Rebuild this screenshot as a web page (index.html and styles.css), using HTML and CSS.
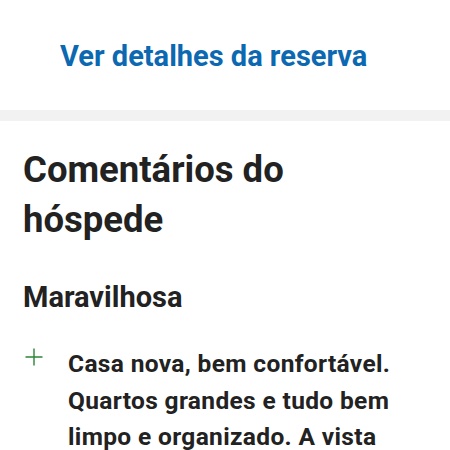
FILE: index.html
```html
<!DOCTYPE html>
<html lang="pt">
  <head>
    <meta charset="UTF-8" />
    <meta name="viewport" content="width=device-width, initial-scale=1.0" />
    <title>Comentários do hóspede</title>
    <link rel="stylesheet" href="styles.css">
  </head>
  <body>
    <div class="booking-link">
      <a href="#">Ver detalhes da reserva</a>
    </div>
    <div class="divider"></div>
    <div class="reviews">
      <h2>Comentários do hóspede</h2>
      <h3>Maravilhosa</h3>
      <div class="review-item">
        <svg class="plus-icon" width="18" height="18" viewBox="0 0 18 18">
          <path d="M9 0.5V17.5M0.5 9H17.5" stroke="#2a8536" stroke-width="1.4" fill="none" />
        </svg>
        <p>Casa nova, bem confortável. Quartos grandes e tudo bem limpo e organizado. A vista</p>
      </div>
    </div>
  </body>
</html>
```

FILE: styles.css
```css
body {
  font-family: Roboto, "Liberation Sans", sans-serif;
  background-color: #fff;
  margin: 0;
  padding: 0;
}
.booking-link {
  height: 110px;
  padding: 2px 0 0 60px;
  box-sizing: border-box;
  display: flex;
  align-items: center;
}
.booking-link a {
  color: #0b68b1;
  font-size: 29px;
  font-weight: bold;
  text-decoration: none;
}
.divider {
  height: 11px;
  background-color: #f2f2f2;
}
.reviews {
  padding: 0 23px;
}
h2 {
  margin: 24px 0 0;
  font-size: 36.5px;
  line-height: 50px;
  font-weight: bold;
  color: #222;
}
h3 {
  margin: 34px 0 0;
  font-size: 29px;
  line-height: 36px;
  font-weight: bold;
  color: #222;
}
.review-item {
  display: flex;
  gap: 25px;
  margin-top: 31px;
}
.plus-icon {
  flex-shrink: 0;
  margin-top: 2px;
  margin-left: 2px;
}
.review-item p {
  margin: 0;
  font-size: 24.5px;
  line-height: 36.5px;
  letter-spacing: 0.35px;
  font-weight: bold;
  color: #222;
  max-width: 350px;
}
```
